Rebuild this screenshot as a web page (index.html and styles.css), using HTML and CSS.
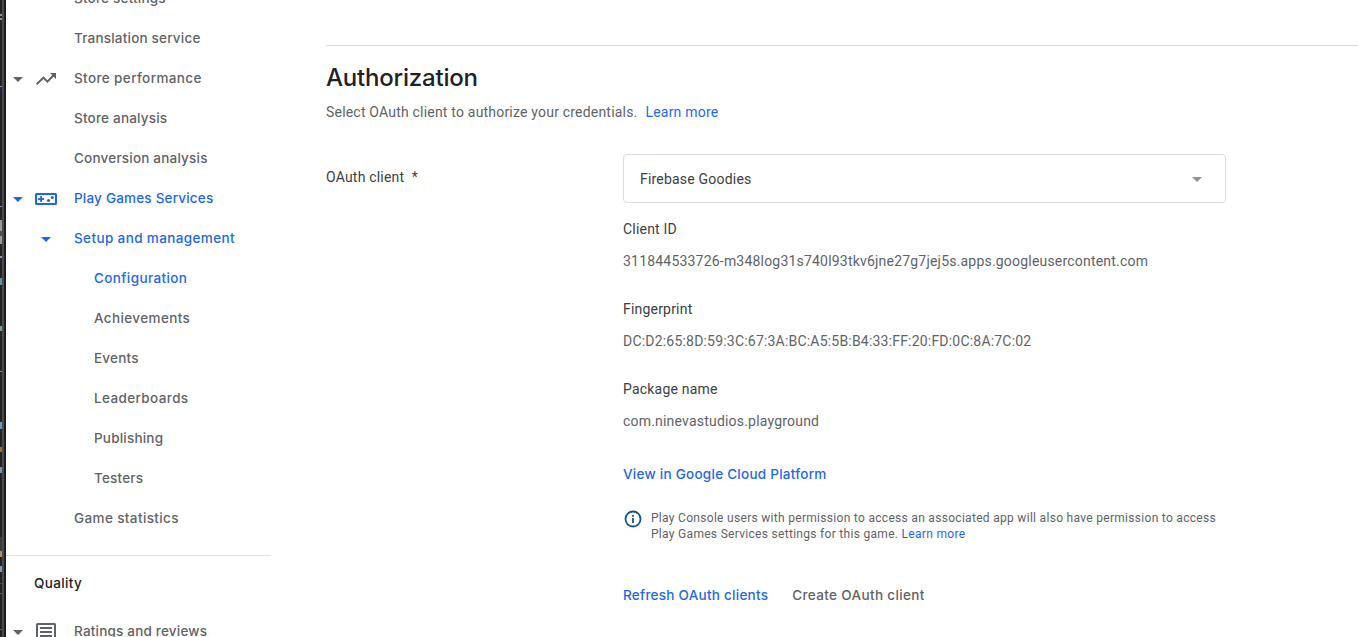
FILE: index.html
```
<!DOCTYPE html>
<html lang="en">
<head>
<meta charset="utf-8">
<title>Play Games Services configuration</title>
<link rel="stylesheet" href="styles.css">
</head>
<body>
<div class="app">
  <div class="edge"><div class="edge-code"></div><div class="edge-bar"></div><div class="edge-dark"></div></div>
  <nav class="sidebar">
    <a class="item">Store settings</a>
    <a class="item">Translation service</a>
    <a class="item top roomy">
      <svg class="caret" viewBox="0 0 10 5"><path d="M0 0h10L5 5z"/></svg>
      <svg class="icon" viewBox="0 0 24 24"><path d="M16 6l2.290 2.290-4.880 4.880-4-4L2 16.590 3.410 18l6-6 4 4 6.300-6.290L22 12V6z"/></svg>
      Store performance</a>
    <a class="item">Store analysis</a>
    <a class="item">Conversion analysis</a>
    <a class="item top blue">
      <svg class="caret" viewBox="0 0 10 5"><path d="M0 0h10L5 5z"/></svg>
      <svg class="icon" viewBox="0 0 24 24"><path fill-rule="evenodd" d="M2.500 6h19A1.500 1.500 0 0 1 23 7.500v9a1.500 1.500 0 0 1-1.500 1.500h-19A1.500 1.500 0 0 1 1 16.500v-9A1.500 1.500 0 0 1 2.500 6zM3 8v8h18V8zM6.200 9h1.800v2.100h2.100v1.800H8V15H6.200v-2.100H4.100v-1.800h2.100z"/><circle cx="14.500" cy="13.500" r="1.600"/><circle cx="18.300" cy="10.500" r="1.600"/></svg>
      Play Games Services</a>
    <a class="item group blue roomy"><svg class="caret" viewBox="0 0 10 5"><path d="M0 0h10L5 5z"/></svg>Setup and management</a>
    <a class="item sub blue roomy">Configuration</a>
    <a class="item sub roomy">Achievements</a>
    <a class="item sub">Events</a>
    <a class="item sub roomy">Leaderboards</a>
    <a class="item sub">Publishing</a>
    <a class="item sub">Testers</a>
    <a class="item roomy">Game statistics</a>
    <h2 class="section roomy">Quality</h2>
    <a class="item top">
      <svg class="caret" viewBox="0 0 10 5"><path d="M0 0h10L5 5z"/></svg>
      <svg class="icon" viewBox="0 0 24 24"><path fill-rule="evenodd" d="M3.500 3h17A1.500 1.500 0 0 1 22 4.500v15a1.500 1.500 0 0 1-1.500 1.500h-17A1.500 1.500 0 0 1 2 19.500v-15A1.500 1.500 0 0 1 3.500 3zM4 5v14h16V5zM6 7h12v2H6zM6 11h12v2H6zM6 15h12v2H6z"/></svg>
      Ratings and reviews</a>
  </nav>
  <main class="main">
    <h1 class="title">Authorization</h1>
    <p class="intro">Select OAuth client to authorize your credentials.<a class="link learn">Learn more</a></p>
    <div class="form">
      <div class="label">OAuth client&nbsp; *</div>
      <div class="fields">
        <div class="select"><span>Firebase Goodies</span><svg class="caret" viewBox="0 0 10 5"><path d="M0 0h10L5 5z"/></svg></div>
        <dl class="details">
          <dt>Client ID</dt><dd>311844533726-m348log31s740l93tkv6jne27g7jej5s.apps.googleusercontent.com</dd>
          <dt>Fingerprint</dt><dd>DC:D2:65:8D:59:3C:67:3A:BC:A5:5B:B4:33:FF:20:FD:0C:8A:7C:02</dd>
          <dt>Package name</dt><dd>com.ninevastudios.playground</dd>
        </dl>
        <a class="action cloud">View in Google Cloud Platform</a>
        <div class="note">
          <svg class="info" viewBox="0 0 20 20"><circle cx="10" cy="10" r="7.500"/><path d="M10 9v5M10 6v1.700"/></svg>
          <p>Play Console users with permission to access an associated app will also have permission to access<br>Play Games Services settings for this game. <a class="link">Learn more</a></p>
        </div>
        <div class="actions"><a class="action refresh">Refresh OAuth clients</a><a class="action create">Create OAuth client</a></div>
      </div>
    </div>
  </main>
</div>
</body>
</html>
```
FILE: styles.css
```
* { box-sizing: border-box; }
body { margin: 0; background: #fff; overflow: hidden; font: 14px/20px Roboto, sans-serif; letter-spacing: .2px; color: #5f6368; }
h1, h2, p, dl, dd { margin: 0; }
.app { display: flex; height: 637px; overflow: hidden; }
.edge { display: flex; width: 6px; flex: none; }
.edge div { width: 2px; }
/* sliver of the editor window behind the browser */
.edge-code {
  background: linear-gradient(#232325 14px, #8c9096 14px 16px, #232325 16px 18px, #8c9096 18px 20px,
    #232325 20px 86px, #8c8f98 86px 87px, #232343 87px 93px, #232325 93px 206px, #8c8f98 206px 207px,
    #232325 207px 220px, #969ba6 220px 231px, #5a4a40 231px 236px, #969ba6 236px 244px, #232325 244px 256px,
    #7fa0c8 256px 258px, #232325 258px 278px, #5f94a8 278px 285px, #232325 285px 326px, #7f9a9a 326px 331px,
    #232325 331px 371px, #8c8f98 371px 372px, #232325 372px 422px, #6a9ab8 422px 429px, #232325 429px 447px,
    #a06c30 447px 452px, #232325 452px 467px, #6a9aa8 467px 473px, #232325 473px 537px, #3a3a40 537px 551px,
    #b09060 551px 557px, #232325 557px 566px, #7f9ab0 566px 572px, #232325 572px 583px, #20547c 583px 584px,
    #232325 584px 593px, #a04030 593px 594px, #232325 594px 629px, #a04030 629px 630px, #232325 630px);
}
.edge-bar { background: #4b4b4b; }
.edge-dark { background: #1c1c1e; }
.sidebar { width: 265px; flex: none; margin-top: -22px; font-family: Inter, sans-serif; font-weight: 500; font-size: 13.500px; letter-spacing: .2px; }
.item { display: flex; align-items: center; height: 40px; padding-left: 68px; white-space: nowrap; }
.item.top { padding-left: 7px; }
.item.group { padding-left: 35px; }
.item.sub { padding-left: 88px; }
.roomy { letter-spacing: .38px; }
.caret { width: 10px; height: 5px; flex: none; fill: currentColor; margin-top: 2px; }
.icon { width: 24px; height: 24px; flex: none; fill: currentColor; margin: 1px 16px 0 11px; }
.group .caret { margin-right: 23px; }
.blue { color: #1f68e5; }
.section { margin-top: 17px; border-top: 1px solid #e4e5e7; padding: 17px 28px 18px; font-size: 13.500px; font-weight: 500; line-height: 20px; color: #202124; }
.main { flex: 1; margin: 45px 0 0 55px; border-top: 1px solid #dadce0; }
.title { margin-top: 16px; font: 500 24px/32px Inter, sans-serif; letter-spacing: -.2px; color: #202124; }
.intro { margin-top: 8px; }
.link { color: #1f68e5; }
.learn { margin-left: 8px; }
.form { display: flex; margin-top: 32px; }
.label { width: 297px; padding-top: 13px; color: #3c4043; }
.fields { width: 603px; }
.select { display: flex; align-items: center; justify-content: space-between; height: 49px; padding: 0 23px 0 16px; border: 1px solid #dadce0; border-radius: 4px; color: #3c4043; }
.select .caret { color: #929497; }
.details { margin-top: 16px; }
.details dt { color: #3c4043; margin-bottom: 12px; }
.details dd { margin-bottom: 28px; }
.action { font-family: Inter, sans-serif; font-weight: 500; font-size: 13.500px; letter-spacing: .26px; color: #1f68e5; }
.cloud { display: block; margin-top: 33px; }
.note { display: flex; margin-top: 26px; font-size: 12px; line-height: 16px; letter-spacing: .3px; white-space: nowrap; }
.info { width: 20px; height: 20px; margin: -1px 8px 0 0; fill: none; stroke: #13568f; stroke-width: 1.800; }
.actions { display: flex; gap: 24px; margin-top: 43px; }
.action.create { color: #5f6368; letter-spacing: .36px; }
```
